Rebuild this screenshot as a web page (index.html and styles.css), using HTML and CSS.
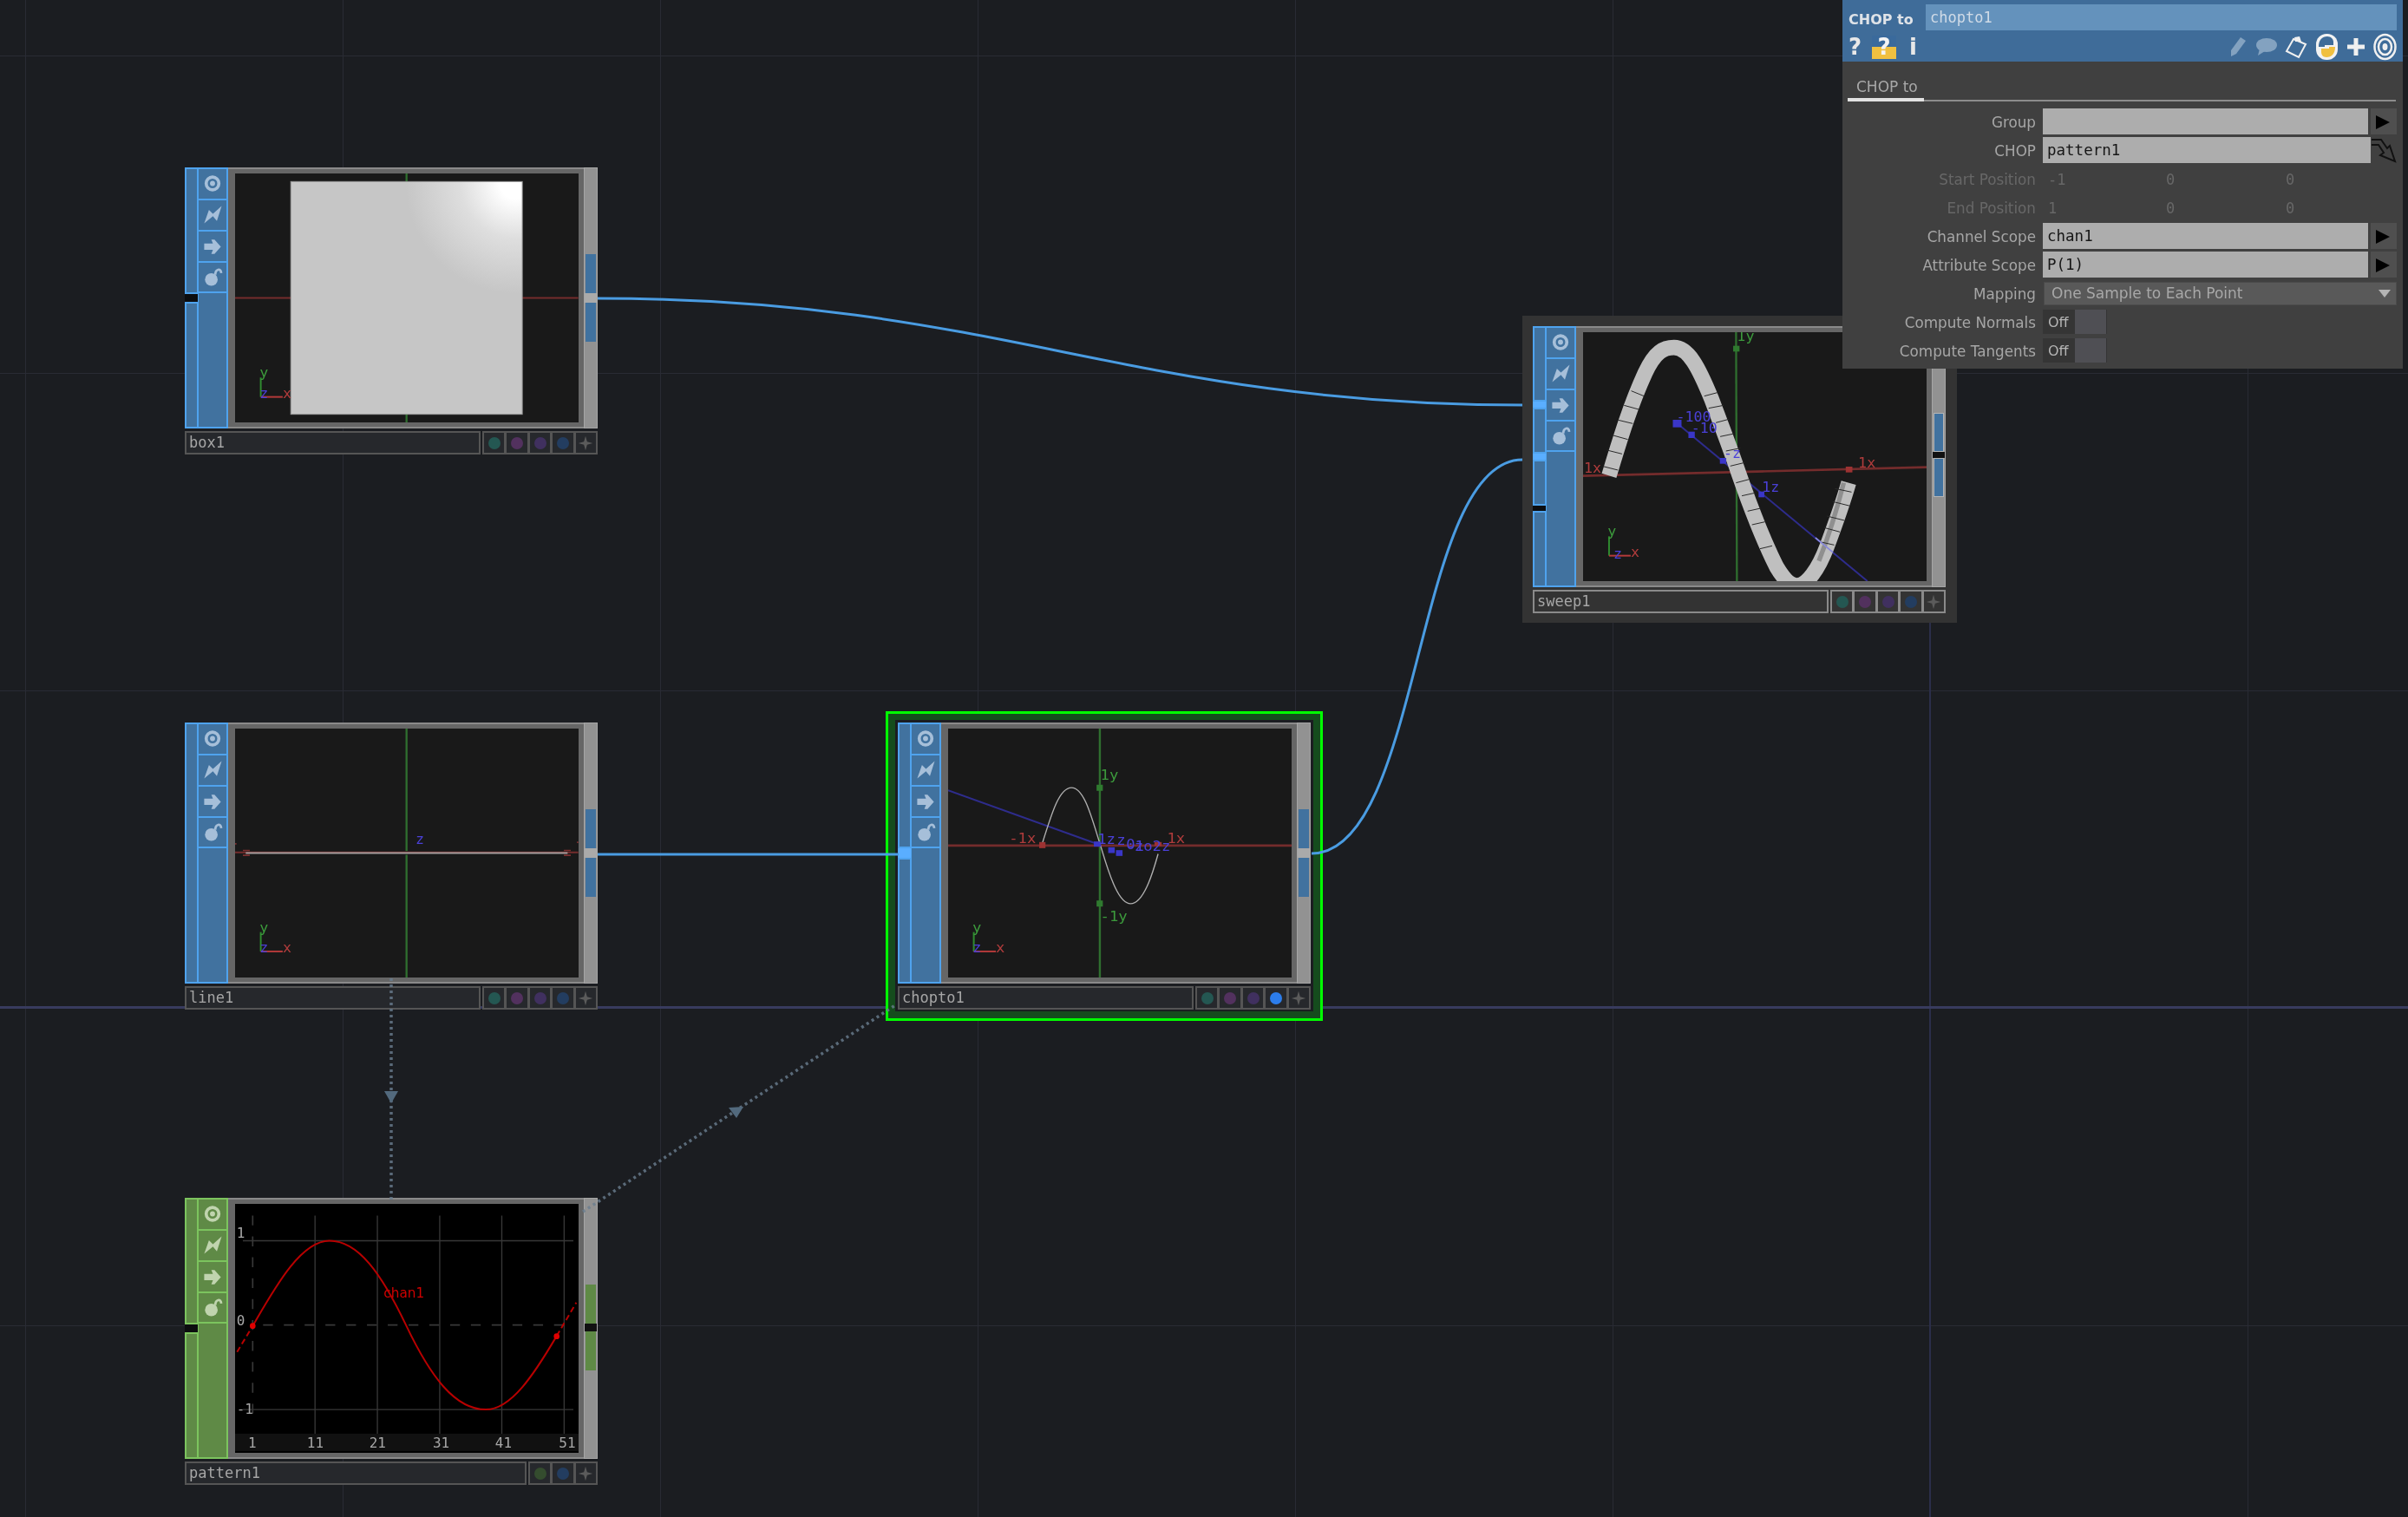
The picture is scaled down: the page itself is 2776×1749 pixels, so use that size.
FILE: index.html
```html
<!DOCTYPE html>
<html lang="en">
<head>
<meta charset="utf-8">
<title>CHOP to network</title>
<link rel="stylesheet" href="styles.css">
</head>
<body>
<svg class="defs" width="0" height="0">
  <defs>
    <symbol id="i-target" viewBox="0 0 35 36"><circle cx="17.5" cy="18" r="8" fill="none" stroke="currentColor" stroke-width="4"/><circle cx="17.5" cy="18" r="3.2" fill="currentColor"/></symbol>
    <symbol id="i-bolt" viewBox="0 0 35 36"><polygon points="7,29 13,12 18,17 29,7 23,26 18,20" fill="currentColor"/></symbol>
    <symbol id="i-arrow" viewBox="0 0 35 36"><polygon points="7,15 18,15 16,10 20,10 28,19 20,28 16,28 18,23 7,23" fill="currentColor"/></symbol>
    <symbol id="i-lock" viewBox="0 0 35 36"><circle cx="16" cy="21" r="8" fill="currentColor"/><path d="M21 15 C21 8 28 6 28.500 13" fill="none" stroke="currentColor" stroke-width="3"/></symbol>
    <symbol id="i-star" viewBox="0 0 24 24"><polygon points="12,3 14,10 21,12 14,14 12,21 10,14 3,12 10,10" fill="currentColor"/></symbol>
  </defs>
</svg>

<div class="canvas">
  <svg class="wires" width="2776" height="1749" viewBox="0 0 2776 1749">
    <line class="axis-v" x1="2225" y1="420" x2="2225" y2="1749"/>
    <line class="axis-h" x1="0" y1="1161.500" x2="2776" y2="1161.500"/>
    <path class="wire" d="M689 344 C1150 344 1300 467 1757 467"/>
  </svg>

  <article class="node at-box">
    <div class="body">
      <div class="strip"><div class="seg grow"></div><div class="hole"></div><div class="seg grow"></div></div>
      <div class="tools">
        <div class="tool"><svg class="ico"><use href="#i-target"/></svg></div>
        <div class="tool"><svg class="ico"><use href="#i-bolt"/></svg></div>
        <div class="tool"><svg class="ico"><use href="#i-arrow"/></svg></div>
        <div class="tool"><svg class="ico"><use href="#i-lock"/></svg></div>
      </div>
      <div class="frame">
        <svg class="view" viewBox="213 60 1190 860" preserveAspectRatio="none">
          <defs><radialGradient id="glow" gradientUnits="userSpaceOnUse" cx="1185" cy="95" r="380"><stop offset="0.14" stop-color="#fff"/><stop offset="0.5" stop-color="#dedede"/><stop offset="1" stop-color="#c6c6c6"/></radialGradient></defs>
          <line class="ax-r" x1="213" y1="490" x2="1402" y2="490"/>
          <line class="ax-g" x1="807" y1="60" x2="807" y2="920"/>
          <rect x="406" y="88" width="802" height="804" fill="url(#glow)" stroke="#9a9a9a" stroke-width="3"/>
          <g class="gizmo"><line class="gz-g" x1="302" y1="765" x2="302" y2="832"/><line class="gz-r" x1="302" y1="832" x2="378" y2="832"/><text class="t-g" x="298" y="765">y</text><text class="t-b" x="298" y="835">z</text><text class="t-r" x="378" y="835">x</text></g>
        </svg>
      </div>
      <div class="right"><div class="r-top"></div><div class="port"></div><div class="r-gap"></div><div class="port"></div><div class="r-end"></div></div>
    </div>
    <footer class="foot">
      <div class="name">box1</div>
      <div class="btns"><span class="btn"><i class="dot teal"></i></span><span class="btn"><i class="dot plum"></i></span><span class="btn"><i class="dot vio"></i></span><span class="btn"><i class="dot navy"></i></span><span class="btn"><svg class="star"><use href="#i-star"/></svg></span></div>
    </footer>
  </article>

  <article class="node at-line">
    <div class="body">
      <div class="strip"><div class="seg grow"></div></div>
      <div class="tools">
        <div class="tool"><svg class="ico"><use href="#i-target"/></svg></div>
        <div class="tool"><svg class="ico"><use href="#i-bolt"/></svg></div>
        <div class="tool"><svg class="ico"><use href="#i-arrow"/></svg></div>
        <div class="tool"><svg class="ico"><use href="#i-lock"/></svg></div>
      </div>
      <div class="frame">
        <svg class="view" viewBox="213 62 1190 860" preserveAspectRatio="none">
          <line class="ax-g" x1="807" y1="62" x2="807" y2="485"/><line class="ax-g" x1="807" y1="498" x2="807" y2="922"/>
          <line class="ax-r" x1="213" y1="490" x2="1402" y2="490"/>
          <line class="ln-w" x1="250" y1="492" x2="1365" y2="492"/>
          <path class="ticks" d="M240 483 H264 M240 500 H264 M1352 483 H1376 M1352 500 H1376 M213 460 H218 M1397 455 H1402"/>
          <text class="t-b" x="838" y="462">z</text>
          <g class="gizmo"><line class="gz-g" x1="302" y1="765" x2="302" y2="832"/><line class="gz-r" x1="302" y1="832" x2="378" y2="832"/><text class="t-g" x="298" y="765">y</text><text class="t-b" x="298" y="835">z</text><text class="t-r" x="378" y="835">x</text></g>
        </svg>
      </div>
      <div class="right"><div class="r-top"></div><div class="port"></div><div class="r-gap"></div><div class="port"></div><div class="r-end"></div></div>
    </div>
    <footer class="foot">
      <div class="name">line1</div>
      <div class="btns"><span class="btn"><i class="dot teal"></i></span><span class="btn"><i class="dot plum"></i></span><span class="btn"><i class="dot vio"></i></span><span class="btn"><i class="dot navy"></i></span><span class="btn"><svg class="star"><use href="#i-star"/></svg></span></div>
    </footer>
  </article>

  <div class="selected at-chop">
    <div class="ring">
      <article class="node flat">
        <div class="body">
          <div class="strip"><div class="seg tall"></div><div class="lit"></div><div class="seg grow"></div></div>
          <div class="tools">
            <div class="tool"><svg class="ico"><use href="#i-target"/></svg></div>
            <div class="tool"><svg class="ico"><use href="#i-bolt"/></svg></div>
            <div class="tool"><svg class="ico"><use href="#i-arrow"/></svg></div>
            <div class="tool"><svg class="ico"><use href="#i-lock"/></svg></div>
          </div>
          <div class="frame">
            <svg class="view" viewBox="242 92 1150 860" preserveAspectRatio="none">
              <line class="ax-g" x1="750" y1="92" x2="750" y2="952"/>
              <line class="ax-r thick" x1="242" y1="496" x2="1392" y2="496"/>
              <line class="ax-b" x1="242" y1="305" x2="745" y2="492"/>
              <path class="sine" d="M557 490 C590 380 615 296 655 296 C700 296 725 410 755 505 C785 610 815 697 853 697 C895 697 925 600 945 525"/>
              <rect class="m-r" x="547" y="484" width="21" height="21"/>
              <rect class="m-r" x="933" y="484" width="24" height="14"/>
              <rect class="m-g" x="739" y="286" width="21" height="21"/>
              <rect class="m-g" x="739" y="686" width="21" height="21"/>
              <rect class="m-b" x="730" y="482" width="24" height="18"/>
              <rect class="m-b" x="778" y="502" width="22" height="20"/>
              <rect class="m-b" x="804" y="512" width="22" height="20"/>
              <text class="t-g" x="752" y="268">1y</text>
              <text class="t-g" x="752" y="758">-1y</text>
              <text class="t-r" x="446" y="488">-1x</text>
              <text class="t-r" x="975" y="488">1x</text>
              <text class="t-b" x="742" y="490">1z</text>
              <text class="t-b" x="806" y="494">z</text>
              <text class="t-b" x="838" y="510">0</text>
              <text class="t-b" x="838" y="514">-1</text>
              <text class="t-b" x="866" y="514">zo2z</text>
              <g class="gizmo"><line class="gz-g" x1="328" y1="795" x2="328" y2="862"/><line class="gz-r" x1="328" y1="862" x2="402" y2="862"/><text class="t-g" x="323" y="795">y</text><text class="t-b" x="323" y="865">z</text><text class="t-r" x="402" y="865">x</text></g>
            </svg>
          </div>
          <div class="right"><div class="r-top"></div><div class="port"></div><div class="r-gap"></div><div class="port"></div><div class="r-end"></div></div>
        </div>
        <footer class="foot">
          <div class="name">chopto1</div>
          <div class="btns"><span class="btn"><i class="dot teal"></i></span><span class="btn"><i class="dot plum"></i></span><span class="btn"><i class="dot vio"></i></span><span class="btn"><i class="dot live"></i></span><span class="btn"><svg class="star"><use href="#i-star"/></svg></span></div>
        </footer>
      </article>
    </div>
  </div>

  <div class="backing at-sweep">
    <article class="node flat lifted">
      <div class="body">
        <div class="strip"><div class="seg s87"></div><div class="lit thin"></div><div class="seg s53"></div><div class="lit thin"></div><div class="seg s53"></div><div class="hole short"></div><div class="seg grow"></div></div>
        <div class="tools">
          <div class="tool"><svg class="ico"><use href="#i-target"/></svg></div>
          <div class="tool"><svg class="ico"><use href="#i-bolt"/></svg></div>
          <div class="tool"><svg class="ico"><use href="#i-arrow"/></svg></div>
          <div class="tool"><svg class="ico"><use href="#i-lock"/></svg></div>
        </div>
        <div class="frame">
          <svg class="view" viewBox="225 69 1190 861" preserveAspectRatio="none">
            <line class="ax-g" x1="755" y1="69" x2="758" y2="930"/>
            <line class="ax-r thick" x1="225" y1="566" x2="1415" y2="536"/>
            <line class="ax-b" x1="548" y1="382" x2="1210" y2="930"/>
            <path class="ribbon" d="M315 565 C350 450 385 330 440 210 C475 135 505 122 540 122 C590 122 625 190 670 300 C700 380 735 470 765 560 C800 660 850 790 895 880 C925 930 945 945 965 945 C1000 945 1040 890 1070 810 C1100 730 1125 660 1145 590"/>
            <path class="ribbon-edge" d="M1042 860 C1070 790 1100 700 1128 590"/>
            <path class="cuts" d="M392 272 L436 290 M367 322 L418 336 M347 373 L397 385 M326 425 L380 440 M308 477 L360 490 M294 533 L346 546 M645 290 L690 278 M660 332 L712 322 M685 382 L730 370 M700 430 L748 420 M720 480 L770 470 M735 532 L785 520 M755 590 L800 578 M775 635 L820 625 M795 688 L840 678 M810 735 L855 725 M838 818 L880 808 M1098 610 L1155 622 M1090 655 L1150 670 M1070 705 L1130 720 M1060 745 L1115 760 M1050 795 L1095 805"/>
            <line class="ax-b soft" x1="1030" y1="780" x2="1090" y2="830"/>
            <rect class="m-b" x="536" y="372" width="30" height="26"/>
            <rect class="m-b" x="590" y="413" width="22" height="22"/>
            <rect class="m-b" x="699" y="504" width="22" height="20"/>
            <rect class="m-b" x="833" y="620" width="20" height="20"/>
            <rect class="m-r" x="1135" y="534" width="23" height="20"/>
            <rect class="m-g" x="745" y="116" width="22" height="20"/>
            <text class="t-g" x="758" y="100">1y</text>
            <text class="t-r" x="228" y="556">1x</text>
            <text class="t-r" x="1178" y="538">1x</text>
            <text class="t-b" x="548" y="378">-100</text>
            <text class="t-b" x="600" y="416">-10</text>
            <text class="t-b" x="712" y="505">-z</text>
            <text class="t-b" x="845" y="622">1z</text>
            <g class="gizmo"><line class="gz-g" x1="315" y1="775" x2="315" y2="842"/><line class="gz-r" x1="315" y1="842" x2="390" y2="842"/><text class="t-g" x="310" y="775">y</text><text class="t-b" x="330" y="852">z</text><text class="t-r" x="390" y="845">x</text></g>
          </svg>
        </div>
        <div class="right"><div class="r-top"></div><div class="port edged"></div><div class="r-hole"></div><div class="port edged"></div><div class="r-end"></div></div>
      </div>
      <footer class="foot">
        <div class="name">sweep1</div>
        <div class="btns"><span class="btn"><i class="dot teal"></i></span><span class="btn"><i class="dot plum"></i></span><span class="btn"><i class="dot vio"></i></span><span class="btn"><i class="dot navy"></i></span><span class="btn"><svg class="star"><use href="#i-star"/></svg></span></div>
      </footer>
    </article>
  </div>

  <article class="node green at-pattern">
    <div class="body">
      <div class="strip"><div class="seg grow"></div><div class="hole"></div><div class="seg grow"></div></div>
      <div class="tools">
        <div class="tool"><svg class="ico"><use href="#i-target"/></svg></div>
        <div class="tool"><svg class="ico"><use href="#i-bolt"/></svg></div>
        <div class="tool"><svg class="ico"><use href="#i-arrow"/></svg></div>
        <div class="tool"><svg class="ico"><use href="#i-lock"/></svg></div>
      </div>
      <div class="frame">
        <svg class="view black" viewBox="213 55 1190 857" preserveAspectRatio="none">
          <rect class="scale-band" x="213" y="846" width="1190" height="60"/>
          <path class="grid" d="M490 95 V846 M706 95 V846 M922 95 V846 M1137 95 V846 M1353 95 V846 M240 182 H1385 M240 763 H1385"/>
          <path class="grid-dash" d="M274 95 V815 M310 472 H1385"/>
          <path class="curve-dash" d="M220 565 L274 475 M1327 510 L1395 395"/>
          <path class="curve" d="M274 475 C350 345 440 182 540 182 C640 182 720 295 805 472 C890 650 975 763 1082 763 C1170 763 1250 640 1327 510"/>
          <circle class="pt" cx="274" cy="475" r="10"/><circle class="pt" cx="1327" cy="511" r="10"/>
          <text class="t-chan" x="728" y="378">chan1</text>
          <text class="t-num" x="218" y="170">1</text><text class="t-num" x="218" y="472">0</text><text class="t-num" x="218" y="778">-1</text>
          <text class="t-num" x="258" y="895">1</text><text class="t-num" x="462" y="895">11</text><text class="t-num" x="678" y="895">21</text><text class="t-num" x="898" y="895">31</text><text class="t-num" x="1114" y="895">41</text><text class="t-num" x="1335" y="895">51</text>
        </svg>
      </div>
      <div class="right"><div class="r-top"></div><div class="port"></div><div class="r-hole wide"></div><div class="port"></div><div class="r-end"></div></div>
    </div>
    <footer class="foot">
      <div class="name">pattern1</div>
      <div class="btns"><span class="btn"><i class="dot moss"></i></span><span class="btn"><i class="dot navy"></i></span><span class="btn"><svg class="star"><use href="#i-star"/></svg></span></div>
    </footer>
  </article>

  <svg class="links" width="2776" height="1749" viewBox="0 0 2776 1749">
    <path class="wire" d="M689 985 L1036 985"/>
    <path class="wire" d="M1512 984 C1640 984 1630 530 1755 530"/>
    <line class="link" x1="451" y1="1128" x2="451" y2="1384"/>
    <polygon class="link-head" points="443,1258 459,1258 451,1272"/>
    <line class="link" x1="672" y1="1397" x2="1032" y2="1159"/>
    <polygon class="link-head" points="840,1277 857,1276 849,1289"/>
  </svg>

  <aside class="panel">
    <header class="phead">
      <div class="ptitle"><span class="ptype">CHOP to</span><span class="pname">chopto1</span></div>
      <div class="pbar">
        <div class="pbar-left">
          <span class="qmark">?</span>
          <span class="qfolder">?</span>
          <span class="imark">i</span>
        </div>
        <div class="pbar-right">
          <svg class="pi dim" width="20" height="26" viewBox="0 0 20 26"><path d="M2 17 L13 2 L19 6 L8 21 L2 24 Z" fill="currentColor"/></svg>
          <svg class="pi dim" width="26" height="24" viewBox="0 0 26 24"><ellipse cx="14" cy="10" rx="12" ry="8" fill="currentColor"/><polygon points="6,14 12,17 4,22" fill="currentColor"/></svg>
          <svg class="pi" width="26" height="28" viewBox="0 0 26 28"><path d="M10 5 L24 11 L16 26 L2 19 Z" fill="none" stroke="currentColor" stroke-width="2"/><path d="M11 3 L17 2 L19 8 L12 8 Z" fill="currentColor"/></svg>
          <svg class="pi" width="27" height="32" viewBox="0 0 27 32"><rect x="1" y="1" width="25" height="30" rx="12" fill="#f2f2f2"/><path d="M4 16 C4 8 8 4 14 4 C18 4 21 7 21 10 V14 H11 V16 Z" fill="#3f6c99"/><path d="M23 16 C23 24 19 28 13 28 C9 28 7 25 7 22 V18 H16 V16 Z" fill="#f0c040"/></svg>
          <svg class="pi" width="22" height="22" viewBox="0 0 22 22"><path d="M11 1 V21 M1 11 H21" fill="none" stroke="currentColor" stroke-width="5"/></svg>
          <svg class="pi" width="27" height="32" viewBox="0 0 27 32"><ellipse cx="13.500" cy="16" rx="12" ry="14" fill="none" stroke="currentColor" stroke-width="2.500"/><ellipse cx="13.500" cy="16" rx="7.500" ry="9" fill="none" stroke="currentColor" stroke-width="2.500"/><ellipse cx="13.500" cy="16" rx="3" ry="4" fill="currentColor"/></svg>
        </div>
      </div>
    </header>
    <div class="tabs"><span class="tab">CHOP to</span></div>
    <div class="params">
      <div class="row"><label class="lbl">Group</label><div class="fieldwrap"><div class="field"></div><span class="menu-btn"></span></div></div>
      <div class="row"><label class="lbl">CHOP</label><div class="fieldwrap"><div class="field">pattern1</div><svg class="drag" width="30" height="30" viewBox="0 0 30 30"><path d="M1 3 H12 L19 13 L22 10 L28 28 L11 21 L15 18 L9 9 H1" fill="none" stroke="#111" stroke-width="2"/></svg></div></div>
      <div class="row off"><label class="lbl">Start Position</label><div class="vals"><span>-1</span><span>0</span><span>0</span></div></div>
      <div class="row off"><label class="lbl">End Position</label><div class="vals"><span>1</span><span>0</span><span>0</span></div></div>
      <div class="row"><label class="lbl">Channel Scope</label><div class="fieldwrap"><div class="field">chan1</div><span class="menu-btn"></span></div></div>
      <div class="row"><label class="lbl">Attribute Scope</label><div class="fieldwrap"><div class="field">P(1)</div><span class="menu-btn"></span></div></div>
      <div class="row"><label class="lbl">Mapping</label><div class="drop"><span>One Sample to Each Point</span><i class="caret"></i></div></div>
      <div class="row"><label class="lbl">Compute Normals</label><div class="toggle"><span class="tog-txt">Off</span><span class="tog-box"></span></div></div>
      <div class="row"><label class="lbl">Compute Tangents</label><div class="toggle"><span class="tog-txt">Off</span><span class="tog-box"></span></div></div>
    </div>
  </aside>
</div>
</body>
</html>
```
FILE: styles.css
```css
* { box-sizing: border-box; }
html, body { margin: 0; padding: 0; background: #1b1d21; }
.defs { position: absolute; }

.canvas {
  position: relative;
  width: 2776px;
  height: 1749px;
  overflow: hidden;
  background-color: #1b1d21;
  background-image:
    linear-gradient(to right, #292b34 1px, transparent 1px),
    linear-gradient(to bottom, #292b34 1px, transparent 1px);
  background-size: 366px 366px;
  background-position: 29px 64px;
  filter: blur(0.6px);
  font-family: "DejaVu Sans", sans-serif;
}

.wires, .links { position: absolute; left: 0; top: 0; }
.links { pointer-events: none; }
.axis-v { stroke: #2b2e4a; stroke-width: 2; }
.axis-h { stroke: #383b5e; stroke-width: 3; }
.wire { fill: none; stroke: #4a9ce2; stroke-width: 3; }
.link { stroke: #6a7e90; stroke-width: 3.500; stroke-dasharray: 3 4; opacity: .8; }
.link-head { fill: #52697d; }

/* operator placement on the free network canvas */
.node { width: 476px; display: flex; flex-direction: column; gap: 3px; }
.at-box { position: absolute; left: 213px; top: 193px; }
.at-line { position: absolute; left: 213px; top: 833px; }
.at-pattern { position: absolute; left: 213px; top: 1381px; }
.at-chop { position: absolute; left: 1021px; top: 820px; }
.at-sweep { position: absolute; left: 1755px; top: 364px; }

.selected { width: 504px; height: 357px; border: 3px solid #00ff00; background: #154c1d; padding: 7px 8px; }
.ring { background: #1b1d21; padding: 3px; width: 482px; height: 336px; }
.backing { width: 501px; height: 354px; background: #333; padding: 12px; }

.body { height: 301px; display: flex; --fill: #41729f; --edge: #4fa3ee; --icon: #a6bfd9; --lit: #5aaeff; }
.green .body { --fill: #5f8a46; --edge: #7cc45e; --icon: #c0d4ae; --lit: #7cc45e; }

.strip { width: 15px; display: flex; flex-direction: column; }
.seg { background: var(--fill); border: 2px solid var(--edge); border-right-width: 1px; }
.grow { flex: 1; }
.tall { height: 145px; }
.s87 { height: 87px; }
.s53 { height: 53px; }
.hole { height: 9px; background: #0c0d0f; }
.hole.short { height: 6px; }
.lit { height: 11px; background: var(--lit); }
.lit.thin { height: 7px; }

.tools { width: 35px; display: flex; flex-direction: column; background: var(--fill); border: solid var(--edge); border-width: 0 2px 2px 1px; }
.tool { height: 36px; display: flex; align-items: center; justify-content: center; border-top: 2px solid var(--edge); color: var(--icon); padding-bottom: 2px; }
.tool:last-child { height: 37px; border-bottom: 2px solid var(--edge); padding-bottom: 0; }
.ico { width: 33px; height: 33px; display: block; }

.frame { flex: 1; background: #666; border-top: 2px solid #8a8a8a; border-bottom: 2px solid #8a8a8a; padding: 5px 6px 5px 8px; }
.view { display: block; width: 100%; height: 100%; background: #191919; }
.view.black { background: #000; }

.right { width: 16px; display: flex; flex-direction: column; background: #929292; border: 1px solid #a6a6a6; }
.r-top { height: 99px; }
.r-end { flex: 1; }
.port { height: 45px; background: var(--fill); margin: 0 1px; }
.port.edged { border: 1px solid #b5b5b5; }
.r-gap { height: 11px; background: #aaa; }
.r-hole { height: 7px; background: #111; }
.r-hole.wide { height: 9px; }

.foot { height: 27px; display: flex; gap: 2px; }
.name { flex: 1; background: #26282c; border: 2px solid #555; font: 17px/22px "DejaVu Sans Mono", monospace; color: #a6a6a6; padding-left: 3px; white-space: nowrap; overflow: hidden; }
.lifted .name { background: #333; border-color: #8a8a8a; }
.lifted .btn { background: #333; border-color: #8a8a8a; }
.btns { display: flex; }
.btn { width: 27.400px; height: 27px; margin-left: -1px; background: #26282c; border: 2px solid #555; display: flex; align-items: center; justify-content: center; color: #5b5b5b; }
.btn:first-child { margin-left: 0; }
.dot { width: 14px; height: 14px; border-radius: 50%; display: block; }
.teal { background: #245752; }
.plum { background: #52315e; }
.vio { background: #40305f; }
.navy { background: #233d60; }
.moss { background: #344c2e; }
.live { background: #2c7deb; }
.star { width: 22px; height: 22px; display: block; }

/* viewer drawings */
.ax-r { stroke: #742c2c; stroke-width: 6; }
.ax-r.thick { stroke-width: 8; }
.ax-g { stroke: #2f6e2f; stroke-width: 7; }
.ax-b { stroke: #2e2c8c; stroke-width: 6; }
.ax-b.soft { stroke: #8a8add; stroke-width: 5; }
.ln-w { stroke: #a69c9c; stroke-width: 6; }
.ticks { fill: none; stroke: #7c3030; stroke-width: 5; }
.gz-g { stroke: #2f8a2f; stroke-width: 6; }
.gz-r { stroke: #b33a3a; stroke-width: 6; }
.view text { font-family: "DejaVu Sans Mono", monospace; font-size: 50px; }
.t-g { fill: #3c9a3c; }
.t-r { fill: #b03c3c; }
.t-b { fill: #4a40d8; }
.sine { fill: none; stroke: #b0b0b0; stroke-width: 4; }
.m-r { fill: #9c3232; }
.m-g { fill: #2f7a2f; }
.m-b { fill: #3a36c8; }
.ribbon { fill: none; stroke: #bfbfbf; stroke-width: 53; }
.ribbon-edge { fill: none; stroke: #8f8f8f; stroke-width: 16; }
.cuts { fill: none; stroke: #2a2a2a; stroke-width: 3; }
.scale-band { fill: #111; }
.grid { fill: none; stroke: #383838; stroke-width: 4; }
.grid-dash { fill: none; stroke: #383838; stroke-width: 5; stroke-dasharray: 34 38; }
.curve { fill: none; stroke: #b80000; stroke-width: 6; }
.curve-dash { fill: none; stroke: #b80000; stroke-width: 6; stroke-dasharray: 20 12; }
.pt { fill: #e00000; }
.view .t-chan { fill: #d00000; font-family: "DejaVu Sans", sans-serif; font-size: 46px; }
.view .t-num { fill: #a8a8a8; font-size: 48px; }

/* parameter dialog */
.panel { position: absolute; left: 2124px; top: 0; width: 646px; height: 425px; background: #404040; display: flex; flex-direction: column; }
.phead { height: 71px; background: #3f6c99; display: flex; flex-direction: column; padding: 5px 7px 0; }
.ptitle { height: 30px; display: flex; }
.ptype { width: 89px; font-weight: 700; font-size: 16px; line-height: 35px; color: #dfe3e8; }
.pname { flex: 1; background: #6492bc; color: #d0dbe7; font: 17px/30px "DejaVu Sans Mono", monospace; padding-left: 5px; }
.pbar { flex: 1; display: flex; justify-content: space-between; align-items: center; padding-top: 2px; }
.pbar-left { display: flex; align-items: center; }
.qmark, .imark { font-weight: 700; font-size: 26px; color: #e8e8e8; line-height: 30px; }
.qmark { width: 27px; }
.qfolder { width: 28px; height: 27px; text-align: center; font-weight: 700; font-size: 26px; line-height: 27px; color: #f4f4f4; background: linear-gradient(to bottom, #3a6a9c 50%, #f0c040 50%); }
.imark { margin-left: 15px; }
.pbar-right { display: flex; align-items: center; gap: 9px; color: #f0f0f0; }
.pi { display: block; }
.pi.dim { color: #83a2c0; }

.tabs { height: 46px; margin: 0 8px 0 6px; border-bottom: 2px solid #8c8c8c; display: flex; align-items: flex-end; }
.tab { width: 88px; height: 36px; padding: 7px 0 0 10px; border-bottom: 4px solid #e2e2e2; margin-bottom: -2px; font-size: 17px; line-height: 24px; color: #a8a8a8; }

.params { padding-top: 8px; display: flex; flex-direction: column; gap: 3px; }
.row { height: 30px; display: grid; grid-template-columns: 223px 1fr; column-gap: 8px; align-items: center; padding-right: 7px; }
.lbl { text-align: right; font-size: 16.800px; color: #a6a6a6; white-space: nowrap; padding-top: 2px; }
.off .lbl { color: #676767; }
.fieldwrap { display: flex; height: 30px; }
.field { flex: 1; background: #adadad; color: #161616; font: 17.5px/30px "DejaVu Sans Mono", monospace; padding-left: 5px; }
.menu-btn { width: 30px; margin-left: 3px; background: #4f4f4f; position: relative; }
.menu-btn::after { content: ""; position: absolute; left: 6px; top: 8px; border-left: 16px solid #000; border-top: 8px solid transparent; border-bottom: 8px solid transparent; }
.drag { display: block; flex: none; }
.vals { display: grid; grid-template-columns: 136px 138px 1fr; padding: 1px 0 0 6px; font-size: 17px; color: #676767; font-family: "DejaVu Sans Mono", monospace; }
.drop { height: 27px; margin-left: 1px; background: #595959; color: #a8a8a8; font-size: 17px; line-height: 28px; padding: 0 6px 0 8px; display: flex; justify-content: space-between; align-items: center; border: 1px solid #4b4b4b; }
.caret { border-top: 9px solid #b5b5b5; border-left: 7px solid transparent; border-right: 7px solid transparent; }
.toggle { width: 74px; height: 28px; display: flex; background: #353535; }
.tog-txt { width: 37px; padding-left: 6px; font-size: 16px; line-height: 30px; color: #b5b5b5; }
.tog-box { width: 36px; background: #4f4f54; }
```
